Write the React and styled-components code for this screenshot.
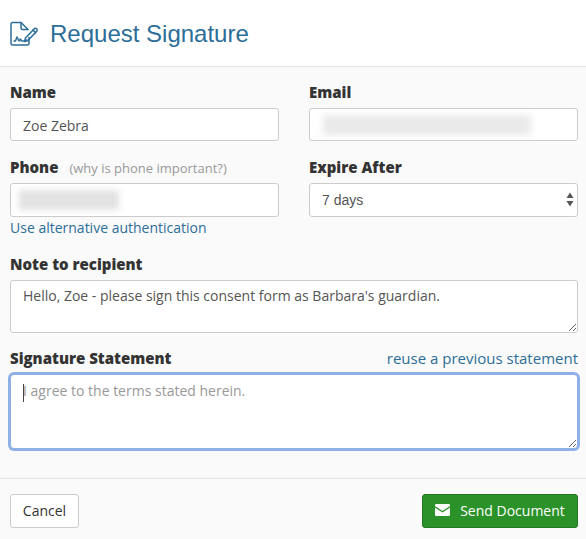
import React from "react";
import styled, { createGlobalStyle } from "styled-components";

const Global = createGlobalStyle`
  html, body { margin: 0; padding: 0; background: #fafafa; }
  body { font-family: "Open Sans", sans-serif; color: #333; overflow: hidden; }
  * { box-sizing: border-box; }
`;
const Page = styled.div`width: 586px; height: 539px; display: flex; flex-direction: column; background: #fafafa;`;
const Header = styled.header`
  height: 67px; background: #fff; border-bottom: 1px solid #e5e5e5;
  display: flex; align-items: center; padding: 2px 0 0 10px; gap: 12px;
`;
const Title = styled.h1`
  margin: 0; font: 400 24px/30px "Liberation Sans", Arial, sans-serif; color: #2c6e98;
`;
const Form = styled.form`display: flex; flex-direction: column; flex: 1; margin: 0;`;
const Body = styled.div`flex: 1; padding: 15px 8px 0 10px; display: flex; flex-direction: column;`;
const Grid = styled.div`display: grid; grid-template-columns: 269px 269px; column-gap: 30px; row-gap: 16px;`;
const Field = styled.div`display: flex; flex-direction: column; min-width: 0;`;
const LabelRow = styled.div`display: flex; justify-content: ${p => (p.$start ? "flex-start" : "space-between")}; align-items: baseline; height: 21px; margin-bottom: 5px;`;
const Label = styled.label`font: 800 15px/21px "Open Sans", sans-serif; color: #333;`;
const Hint = styled.span`font: 400 13px/21px "Open Sans", sans-serif; color: #999; margin-left: 11px;`;
const TextLink = styled.a`font: 400 15px/21px "Open Sans", sans-serif; color: #2c6e98; text-decoration: none;`;
const InputWrap = styled.div`position: relative; height: ${p => p.$h || 33}px; margin-top: ${p => p.$mt || 0}px;`;
const Input = styled.input`
  width: 100%; height: 100%; border: 1px solid #ccc; border-radius: 3px; background: #fff;
  padding: 2px 12px 0; font: 400 14px "Open Sans", sans-serif; color: #555; outline: none; display: block;
`;
const Blurred = styled.span`
  position: absolute; left: ${p => p.$l}px; top: 7px; width: ${p => p.$w}px; height: 20px;
  background: ${p => p.$c}; filter: blur(3px); pointer-events: none;
`;
const SelectBox = styled.select`
  width: 100%; height: 34px; border: 1px solid #ccc; border-radius: 3px; background: #fff;
  padding: 0 12px; font: 400 14px "Liberation Sans", Arial, sans-serif; color: #555; appearance: none; outline: none; display: block;
`;
const Arrows = styled.svg`position: absolute; right: 4px; top: 9px; pointer-events: none;`;
const SubLink = styled(TextLink)`display: block; font-size: 14px; line-height: 21px;`;
const Area = styled.textarea`
  width: 100%; display: block; height: ${p => p.$h}px; border: 1px solid #ccc; border-radius: 3px; background: #fff;
  padding: 5px 12px; font: 400 14px/20px "Open Sans", sans-serif; color: #555; outline: none; resize: vertical;
  &::placeholder { color: #999; opacity: 1; font-size: 14px; }
`;
const FocusArea = styled(Area)`
  border: 1px solid #8fb0e6; border-radius: 4px; box-shadow: 0 0 0 2px #8fb0e6; padding-top: 6px;
`;
const Caret = styled.span`position: absolute; left: 13px; top: 10px; width: 1px; height: 18px; background: #444;`;
const Section = styled.div`margin-top: ${p => p.$mt}px;`;
const Footer = styled.footer`
  height: 61px; border-top: 1px solid #e5e5e5; padding: 15px 8px 0 10px;
  display: flex; justify-content: space-between; align-items: flex-start;
`;
const CancelButton = styled.button`
  width: 69px; height: 34px; border: 1px solid #ccc; border-radius: 3px; background: #fff;
  font: 400 14px "Open Sans", sans-serif; color: #333; padding: 0 0 2px;
`;
const SendButton = styled.button`
  width: 156px; height: 34px; border: 1px solid #1f7a1f; border-radius: 3px; background: #2b9229;
  font: 400 14px "Open Sans", sans-serif; color: #fff; padding: 0 0 2px; display: flex; align-items: center; justify-content: center; gap: 10px;
`;

const SignIcon = () => (
  <svg width="28" height="26" viewBox="0 0 28 26" fill="none" stroke="#2c6e98" strokeWidth="1.5" strokeLinejoin="round" strokeLinecap="round">
    <path d="M19 16.5V22.5a1.5 1.5 0 0 1-1.5 1.5H2.5A1.5 1.5 0 0 1 1 22.5V3A1.5 1.5 0 0 1 2.5 1.5H11L18 8.5" />
    <path d="M11 1.5V7a1.5 1.5 0 0 0 1.5 1.5H18" />
    <path d="M4 20h1.5l1.5-4 2 4 1.5-2 1 2h3l2.5-1" />
    <path d="M15.5 17l9-9.5a1.8 1.8 0 0 1 2.4 2.5l-9 9.5-3.4 1z" />
    <path d="M23 9l2.6 2.6" />
  </svg>
);

export default function App() {
  return (
    <Page>
      <Global />
      <Header>
        <SignIcon />
        <Title>Request Signature</Title>
      </Header>
      <Form onSubmit={e => e.preventDefault()}>
        <Body>
          <Grid>
            <Field>
              <LabelRow><Label>Name</Label></LabelRow>
              <InputWrap><Input readOnly value="Zoe Zebra" /></InputWrap>
            </Field>
            <Field>
              <LabelRow><Label>Email</Label></LabelRow>
              <InputWrap><Input readOnly /><Blurred $l={14} $w={208} $c="#eaeaea" /></InputWrap>
            </Field>
            <Field>
              <LabelRow $start><Label>Phone</Label><Hint>(why is phone important?)</Hint></LabelRow>
              <InputWrap $h={34}><Input readOnly /><Blurred $l={9} $w={100} $c="#e2e2e2" /></InputWrap>
              <SubLink href="#">Use alternative authentication</SubLink>
            </Field>
            <Field>
              <LabelRow><Label>Expire After</Label></LabelRow>
              <InputWrap $h={34}>
                <SelectBox defaultValue="7 days"><option>7 days</option></SelectBox>
                <Arrows width="8" height="15" viewBox="0 0 8 15" fill="#555">
                  <path d="M4 0.5L7.5 6H0.5z" />
                  <path d="M4 14.5L7.5 9H0.5z" />
                </Arrows>
              </InputWrap>
            </Field>
          </Grid>
          <Section $mt={16}>
            <LabelRow><Label>Note to recipient</Label></LabelRow>
            <Area $h={53} readOnly value="Hello, Zoe - please sign this consent form as Barbara's guardian." />
          </Section>
          <Section $mt={15}>
            <LabelRow><Label>Signature Statement</Label><TextLink href="#">reuse a previous statement</TextLink></LabelRow>
            <InputWrap $h={75} $mt={2}>
              <FocusArea $h={75} placeholder="I agree to the terms stated herein." />
              <Caret />
            </InputWrap>
          </Section>
        </Body>
        <Footer>
          <CancelButton type="button">Cancel</CancelButton>
          <SendButton type="submit">
            <svg width="15" height="12" viewBox="0 0 15 12" fill="#fff">
              <path d="M1.3 0h12.4A1.3 1.3 0 0 1 15 1.3v.6L7.5 7 0 1.9v-.6A1.3 1.3 0 0 1 1.3 0z" />
              <path d="M0 3.6l7.5 5 7.5-5v7.1A1.3 1.3 0 0 1 13.7 12H1.3A1.3 1.3 0 0 1 0 10.7z" />
            </svg>
            Send Document
          </SendButton>
        </Footer>
      </Form>
    </Page>
  );
}
